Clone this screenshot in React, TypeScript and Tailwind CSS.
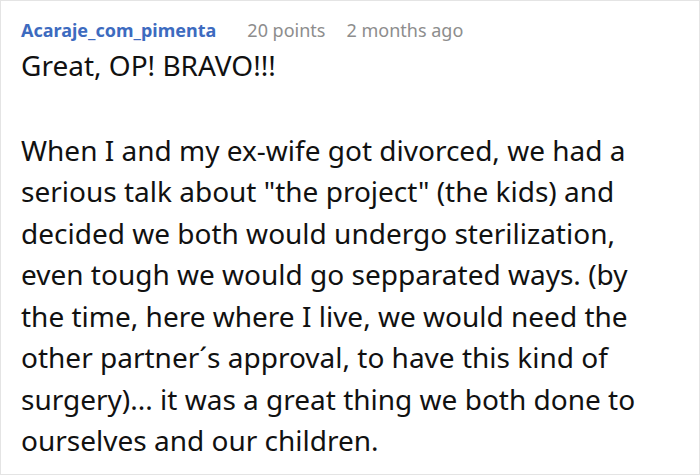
export default function App() {
  const lines = [
    "When I and my ex-wife got divorced, we had a",
    'serious talk about "the project" (the kids) and',
    "decided we both would undergo sterilization,",
    "even tough we would go sepparated ways. (by",
    "the time, here where I live, we would need the",
    "other partner´s approval, to have this kind of",
    "surgery)... it was a great thing we both done to",
    "ourselves and our children.",
  ];
  return (
    <div
      className="w-[700px] h-[475px] bg-white border border-[#e4e4e4] overflow-hidden"
      style={{ fontFamily: '"Noto Sans", "Open Sans", sans-serif' }}
    >
      <div className="pl-[20px] pt-[15px]">
        <div className="flex items-baseline text-[18px] leading-[28px]">
          <span className="font-bold text-[#3d6bbf]">Acaraje_com_pimenta</span>
          <span className="ml-[31px] text-[#8d8d8d]">20 points</span>
          <span className="ml-[21px] text-[#8d8d8d]">2 months ago</span>
        </div>
        <div className="mt-[1px] text-[28px] leading-[41.5px] text-[#111]">
          <p className="whitespace-nowrap">Great, OP! BRAVO!!!</p>
          <p className="mt-[43px]">
            {lines.map((l, i) => (
              <span key={i} className="block whitespace-nowrap">
                {l}
              </span>
            ))}
          </p>
        </div>
      </div>
    </div>
  );
}
